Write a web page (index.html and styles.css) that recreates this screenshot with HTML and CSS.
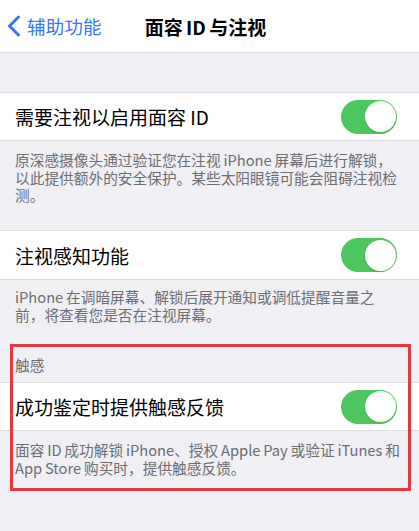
FILE: index.html
```html
<!DOCTYPE html>
<html lang="zh-CN">
<head>
<meta charset="utf-8">
<title>面容ID与注视</title>
<link rel="stylesheet" href="styles.css">
</head>
<body>
<div class="nav">
  <div class="back">
    <svg class="chev" width="16" height="22" viewBox="0 0 16 22"><polyline points="12.5,2 3.5,11 12.5,20" fill="none" stroke="#3478f6" stroke-width="3" stroke-linecap="round" stroke-linejoin="round"/></svg>
    <span>辅助功能</span>
  </div>
  <div class="title">面容 ID 与注视</div>
  <div></div>
</div>
<div class="spacer"></div>

<div class="group">
  <div class="row">
    <span class="label">需要注视以启用面容 ID</span>
    <span class="toggle"><span class="knob"></span></span>
  </div>
</div>
<div class="desc desc-first">
  <div class="line">原深感摄像头通过验证您在注视 iPhone 屏幕后进行解锁，</div>
  <div class="line">以此提供额外的安全保护。某些太阳眼镜可能会阻碍注视检</div>
  <div class="line">测。</div>
</div>

<div class="group">
  <div class="row row-tall">
    <span class="label">注视感知功能</span>
    <span class="toggle"><span class="knob"></span></span>
  </div>
</div>
<div class="desc desc-second">
  <div class="line">iPhone 在调暗屏幕、解锁后展开通知或调低提醒音量之</div>
  <div class="line">前，将查看您是否在注视屏幕。</div>
</div>

<div class="header">触感</div>
<div class="group">
  <div class="row">
    <span class="label">成功鉴定时提供触感反馈</span>
    <span class="toggle"><span class="knob"></span></span>
  </div>
</div>
<div class="desc desc-third">
  <div class="line">面容 ID 成功解锁 iPhone、授权 Apple Pay 或验证 iTunes 和</div>
  <div class="line">App Store 购买时，提供触感反馈。</div>
</div>

<div class="highlight"></div>
</body>
</html>
```

FILE: styles.css
```css
html, body {
  margin: 0;
  padding: 0;
}
body {
  background: #efeff4;
  font-family: "Noto Sans CJK SC", "Noto Sans", sans-serif;
  color: #000;
  width: 419px;
  height: 531px;
  overflow: hidden;
  position: relative;
}
.nav {
  height: 52px;
  background: #fff;
  border-bottom: 1px solid #dcdce0;
  display: grid;
  grid-template-columns: 1fr auto 1fr;
  align-items: center;
}
.back {
  display: flex;
  align-items: center;
  padding-left: 6px;
  gap: 5px;
  color: #3478f6;
  font-size: 18.5px;
  letter-spacing: 0.2px;
}
.chev {
  display: block;
}
.title {
  font-size: 19px;
  font-weight: 600;
  margin-right: 8px;
  word-spacing: -1px;
}
.spacer {
  height: 39px;
}
.group {
  background: #fff;
  border-top: 1px solid #dcdce0;
  border-bottom: 1px solid #dcdce0;
}
.row {
  height: 47px;
  display: flex;
  align-items: center;
  justify-content: space-between;
  padding: 0 22px 0 15px;
}
.row-tall {
  height: 48px;
}
.label {
  font-size: 19px;
}
.toggle {
  width: 56px;
  height: 34px;
  border-radius: 17px;
  background: #4ec65e;
  position: relative;
  flex: none;
}
.knob {
  position: absolute;
  top: 1.5px;
  right: 1.5px;
  width: 31px;
  height: 31px;
  border-radius: 50%;
  background: #fff;
  box-shadow: 0 1px 2px rgba(0, 0, 0, 0.18);
}
.desc {
  font-size: 14.7px;
  color: #6d6d72;
  padding: 0 15px;
  white-space: nowrap;
  word-spacing: -0.5px;
}
.line {
  height: 17.5px;
  line-height: 17.5px;
}
.desc-first {
  padding-top: 10px;
  padding-bottom: 26.5px;
}
.desc-second {
  padding-top: 8px;
  padding-bottom: 33px;
}
.desc-third {
  padding-top: 10px;
}
.header {
  font-size: 14.7px;
  line-height: 17.5px;
  color: #6d6d72;
  padding: 0 15px 8.5px;
}
.highlight {
  position: absolute;
  left: 10px;
  top: 344px;
  width: 401px;
  height: 147px;
  box-sizing: border-box;
  border: 3px solid #e8383f;
}
```
